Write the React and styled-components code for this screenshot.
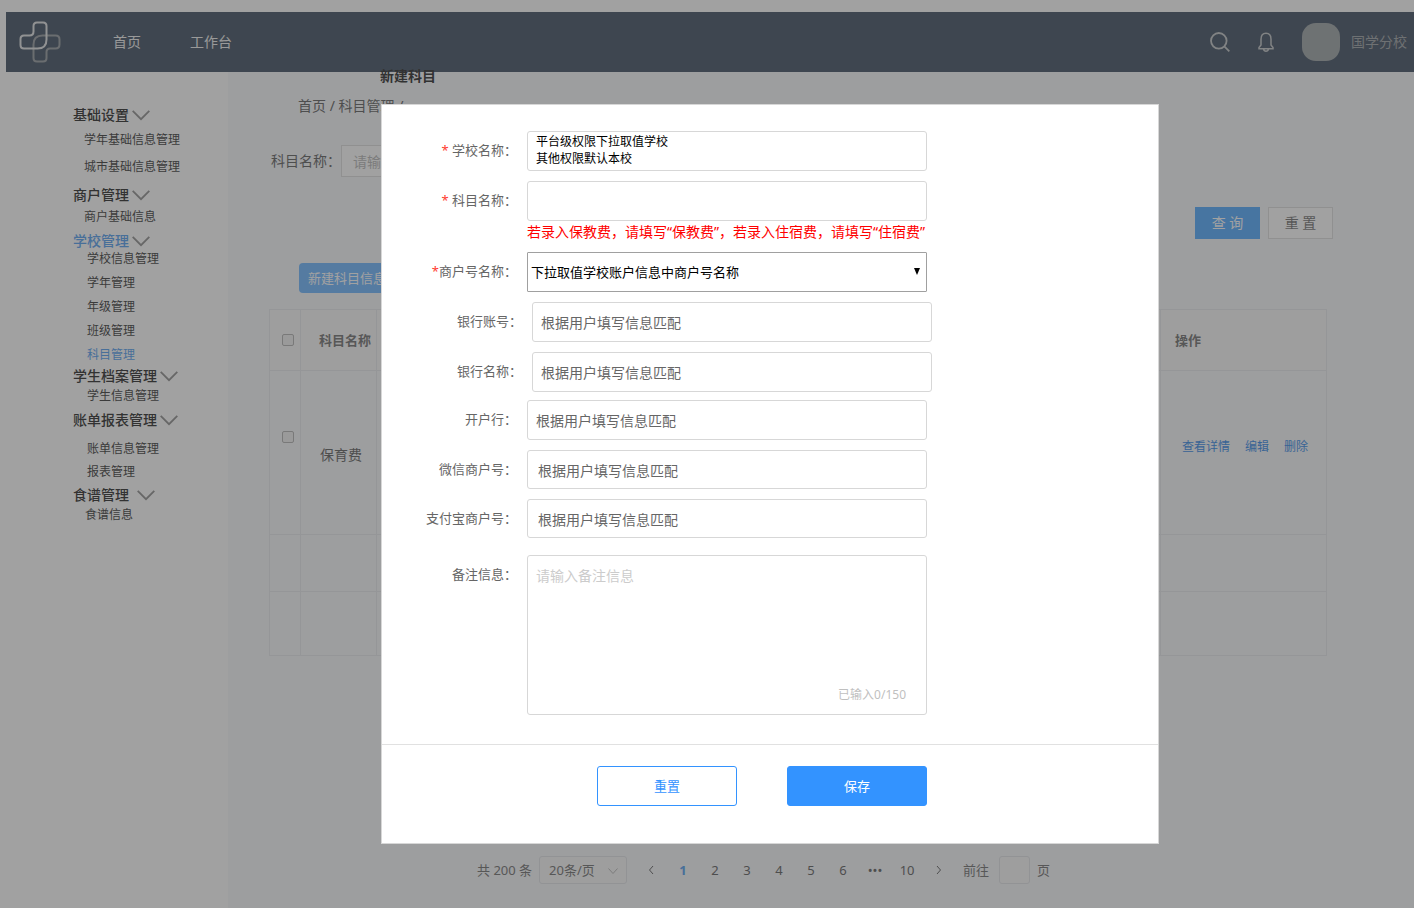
import React from "react";
import styled, { createGlobalStyle } from "styled-components";

const menu = [
  { title: "基础设置", top: 0, lead: 9, gap: 11, indent: 11, items: ["学年基础信息管理", "城市基础信息管理"] },
  { title: "商户管理", top: 12, lead: 6, gap: 8, indent: 11, items: ["商户基础信息"] },
  {
    title: "学校管理",
    active: true,
    top: 8,
    lead: 2,
    gap: 8,
    indent: 14,
    items: ["学校信息管理", "学年管理", "年级管理", "班级管理", "科目管理"],
  },
  { title: "学生档案管理", top: 5, lead: 4, gap: 8, indent: 14, items: ["学生信息管理"] },
  { title: "账单报表管理", top: 8, lead: 13, gap: 7, indent: 14, items: ["账单信息管理", "报表管理"] },
  { title: "食谱管理", top: 7, lead: 4, gap: 8, indent: 12, arrowGap: 8, items: ["食谱信息"] },
];

const currentItem = "科目管理";
const pages = ["1", "2", "3", "4", "5", "6", "•••", "10"];
const matchText = "根据用户填写信息匹配";

const Chevron = () => (
  <svg width="18" height="12" viewBox="0 0 18 12" fill="none" stroke="#949494" strokeWidth="1.800">
    <path d="M.700 1.800 9 10.200l8.300-8.400" />
  </svg>
);

const Arrow = ({ d }) => (
  <svg width="12" height="12" viewBox="0 0 12 12" fill="none" stroke="currentColor" strokeWidth="1">
    <path d={d} />
  </svg>
);

const Logo = () => (
  <svg width="42" height="42" viewBox="0 0 42 42" fill="none" strokeWidth="2">
    <path
      stroke="#9a9fa4"
      d="M23.500 14.500h13q4 0 4 4v5q0 4-4 4H31q-3.500 0-3.500 3.500v6q0 3.500-3.500 3.500h-6q-3.500 0-3.500-3.500V23.500q0-9 9-9Z"
    />
    <path
      stroke="#e2e4e6"
      d="M18 1.500h6q3.500 0 3.500 3.500v13.500q0 9-9 9H5q-3.500 0-3.500-3.500v-6q0-3.500 3.500-3.500h5.500q4 0 4-4V5q0-3.500 3.500-3.500Z"
    />
  </svg>
);

const Field = ({ id, label, required, tight, children }) => (
  <FieldRow>
    <FieldLabel htmlFor={id}>
      {required && <Star>*</Star>}
      {required && !tight && " "}
      {label}：
    </FieldLabel>
    <FieldBody>{children}</FieldBody>
  </FieldRow>
);

const Sidebar = () => (
  <Side>
    {menu.map((group) => (
      <MenuGroup key={group.title} $top={group.top}>
        <MenuTitle type="button" $active={group.active} $arrowGap={group.arrowGap}>
          {group.title}
          <Chevron />
        </MenuTitle>
        <MenuList $lead={group.lead} $gap={group.gap} $indent={group.indent}>
          {group.items.map((item) => (
            <li key={item}>
              <MenuLink href="#" $active={item === currentItem}>
                {item}
              </MenuLink>
            </li>
          ))}
        </MenuList>
      </MenuGroup>
    ))}
  </Side>
);

const SubjectTable = () => (
  <Table>
    <colgroup>
      <CheckCol />
      <NameCol />
      <col />
      <ActionCol />
    </colgroup>
    <thead>
      <Row $height={61}>
        <CheckCell as="th">
          <input type="checkbox" aria-label="全选" />
        </CheckCell>
        <HeadCell $left={18}>科目名称</HeadCell>
        <HeadCell />
        <HeadCell $left={14}>操作</HeadCell>
      </Row>
    </thead>
    <tbody>
      <Row $height={164}>
        <CheckCell $lift={32}>
          <input type="checkbox" aria-label="保育费" />
        </CheckCell>
        <NameCell>保育费</NameCell>
        <td />
        <td>
          <Actions>
            <a href="#">查看详情</a>
            <a href="#">编辑</a>
            <a href="#">删除</a>
          </Actions>
        </td>
      </Row>
      <Row $height={57}>
        <td />
        <td />
        <td />
        <td />
      </Row>
      <Row $height={64}>
        <td />
        <td />
        <td />
        <td />
      </Row>
    </tbody>
  </Table>
);

const Pagination = () => (
  <Pager aria-label="分页">
    <span>共 200 条</span>
    <SizeBox>
      <select aria-label="每页条数">
        <option>20条/页</option>
      </select>
      <Arrow d="M1.500 3.500 6 8.500l4.500-5" />
    </SizeBox>
    <PageList>
      <PageButton type="button" aria-label="上一页">
        <Arrow d="M8 2 4.500 6 8 10" />
      </PageButton>
      {pages.map((page) => (
        <PageButton type="button" key={page} $active={page === "1"}>
          {page}
        </PageButton>
      ))}
      <PageButton type="button" aria-label="下一页">
        <Arrow d="M4 2l3.500 4L4 10" />
      </PageButton>
    </PageList>
    <Jump>
      前往
      <input type="text" />
      页
    </Jump>
  </Pager>
);

const SubjectDialog = () => {
  const [remark, setRemark] = React.useState("");

  return (
    <Overlay>
      <Dialog role="dialog" aria-label="新建科目">
        <Form>
          <Fields>
            <Field id="school" label="学校名称" required>
              <SchoolBox id="school" rows={2} readOnly value={"平台级权限下拉取值学校\n其他权限默认本校"} />
            </Field>
            <Field id="subject" label="科目名称" required>
              <TextInput id="subject" type="text" />
              <Hint>若录入保教费，请填写“保教费”，若录入住宿费，请填写“住宿费”</Hint>
            </Field>
            <Field id="merchant" label="商户号名称" required tight>
              <SelectBox>
                <select id="merchant">
                  <option>下拉取值学校账户信息中商户号名称</option>
                </select>
                <svg width="6" height="7" viewBox="0 0 6 7">
                  <path d="M0 0h6L3 7z" fill="#000" />
                </svg>
              </SelectBox>
            </Field>
            <BankFields>
              <Field id="account" label="银行账号">
                <TextInput id="account" type="text" defaultValue={matchText} />
              </Field>
              <Field id="bank" label="银行名称">
                <TextInput id="bank" type="text" defaultValue={matchText} />
              </Field>
            </BankFields>
          </Fields>
          <Fields>
            <Field id="branch" label="开户行">
              <TextInput id="branch" type="text" defaultValue={matchText} />
            </Field>
            <Field id="wechat" label="微信商户号">
              <TextInput id="wechat" type="text" defaultValue={matchText} $short />
            </Field>
            <Field id="alipay" label="支付宝商户号">
              <TextInput id="alipay" type="text" defaultValue={matchText} $short />
            </Field>
          </Fields>
          <Remark>
            <Field id="remark" label="备注信息">
              <RemarkBox>
                <textarea
                  id="remark"
                  maxLength={150}
                  placeholder="请输入备注信息"
                  value={remark}
                  onChange={(e) => setRemark(e.target.value)}
                />
                <span>已输入{remark.length}/150</span>
              </RemarkBox>
            </Field>
          </Remark>
        </Form>
        <DialogFooter>
          <DialogButton type="button">重置</DialogButton>
          <DialogButton type="button" $primary>
            保存
          </DialogButton>
        </DialogFooter>
      </Dialog>
    </Overlay>
  );
};

export default function App() {
  return (
    <Page>
      <GlobalStyle />
      <Header>
        <Logo />
        <Nav>
          <a href="#">首页</a>
          <a href="#">工作台</a>
        </Nav>
        <Tools>
          <IconButton type="button" aria-label="搜索">
            <svg width="20" height="20" viewBox="0 0 20 20" fill="none" stroke="currentColor" strokeWidth="1.800">
              <circle cx="8.800" cy="8.800" r="7.800" />
              <path d="m14.300 14.300 5 5" />
            </svg>
          </IconButton>
          <IconButton type="button" aria-label="通知">
            <svg width="16" height="20" viewBox="0 0 16 20" fill="none" stroke="currentColor" strokeWidth="1.500">
              <path d="M3 13V7.300C3 3.500 5 1.200 8 1.200s5 2.300 5 6.100V13l2 2.500v1.300H1v-1.300ZM5.500 17q.500 2.200 2.500 2.200t2.500-2.200" />
            </svg>
          </IconButton>
          <Avatar />
          <span>国学分校</span>
        </Tools>
      </Header>
      <Body>
        <Sidebar />
        <Main>
          <PageTitle>新建科目</PageTitle>
          <Crumbs>首页 / 科目管理 /</Crumbs>
          <Filter>
            <label htmlFor="filter">科目名称：</label>
            <input id="filter" type="text" placeholder="请输入科目名称" />
          </Filter>
          <FilterButtons>
            <SearchButton type="button" $primary>
              查 询
            </SearchButton>
            <SearchButton type="button">重 置</SearchButton>
          </FilterButtons>
          <CreateButton type="button">新建科目信息</CreateButton>
          <SubjectTable />
          <Pagination />
        </Main>
      </Body>
      <SubjectDialog />
    </Page>
  );
}

const GlobalStyle = createGlobalStyle`
  * {
    box-sizing: border-box;
  }

  body {
    margin: 0;
    background: #fff;
  }

  body, button, input, select, textarea {
    font-family: "Noto Sans", "Noto Sans CJK SC", sans-serif;
    font-size: 14px;
    line-height: 20px;
  }

  button {
    padding: 0;
    border: none;
    background: none;
    cursor: pointer;
  }

  a {
    color: inherit;
    text-decoration: none;
  }

  svg {
    display: block;
    flex: none;
  }
`;

const Page = styled.div`
  display: flex;
  flex-direction: column;
  min-height: 100vh;
  padding-top: 12px;
  color: #666;
`;

const Header = styled.header`
  display: flex;
  align-items: center;
  height: 60px;
  margin-left: 6px;
  padding: 0 7px 0 13px;
  background: #495869;
  color: #f0f0f0;
`;

const Nav = styled.nav`
  display: flex;
  gap: 49px;
  margin-left: 52px;
`;

const Tools = styled.div`
  display: flex;
  align-items: center;
  margin-left: auto;
  color: #a2a6aa;
`;

const IconButton = styled.button`
  margin-right: 28px;
  color: #c4c7ca;
`;

const Avatar = styled.div`
  width: 38px;
  height: 38px;
  margin-right: 11px;
  border-radius: 14px;
  background: #a2a8ab;
`;

const Body = styled.div`
  display: flex;
  flex: 1;
`;

const Side = styled.aside`
  flex: none;
  width: 228px;
  padding: 35px 0 0 73px;
`;

const MenuGroup = styled.div`
  margin-top: ${(p) => p.$top}px;
`;

const MenuTitle = styled.button`
  display: flex;
  align-items: center;
  gap: ${(p) => p.$arrowGap || 3}px;
  font-weight: 500;
  line-height: 16px;
  color: ${(p) => (p.$active ? "#5ba3f0" : "#333")};
`;

const MenuList = styled.ul`
  display: flex;
  flex-direction: column;
  gap: ${(p) => p.$gap}px;
  margin: ${(p) => p.$lead}px 0 0;
  padding: 0 0 0 ${(p) => p.$indent}px;
  font-size: 12px;
  line-height: 16px;
  list-style: none;
`;

const MenuLink = styled.a`
  display: block;
  color: ${(p) => (p.$active ? "#5ba3f0" : "#444")};
`;

const Main = styled.main`
  flex: 1;
  min-width: 0;
  padding: 0 87px 24px 41px;
  background: #f7f9fc;
`;

const PageTitle = styled.h1`
  margin: 0 0 16px 111px;
  font-size: 14px;
  font-weight: 700;
  line-height: 8px;
  color: #333;
`;

const Crumbs = styled.div`
  margin: 0 0 29px 29px;
`;

const Filter = styled.div`
  display: flex;
  align-items: center;
  padding-left: 2px;

  input {
    width: 200px;
    height: 32px;
    padding: 0 11px;
    border: 1px solid #e0e0e0;
    background: #fff;
  }

  input::placeholder {
    color: #bbb;
  }
`;

const FilterButtons = styled.div`
  display: flex;
  justify-content: flex-end;
  gap: 8px;
  margin: 30px -6px 24px 0;
`;

const SearchButton = styled.button`
  width: 65px;
  height: 32px;
  border: 1px solid ${(p) => (p.$primary ? "#5aaeff" : "#e0e0e0")};
  background: ${(p) => (p.$primary ? "#5aaeff" : "#fff")};
  color: ${(p) => (p.$primary ? "#fff" : "#777")};
`;

const CreateButton = styled.button`
  display: block;
  height: 30px;
  margin: 0 0 16px 30px;
  padding: 0 9px;
  border-radius: 4px;
  background: #73b9ff;
  color: #fff;
  font-size: 13px;
`;

const Table = styled.table`
  width: 100%;
  border-collapse: collapse;
  table-layout: fixed;

  th, td {
    border: 1px solid #e9ebee;
    padding: 0;
    text-align: left;
    white-space: nowrap;
  }

  th {
    background: #fafafa;
  }

  input {
    display: block;
    width: 12px;
    height: 12px;
    margin: 0 auto;
    border: 1px solid #b5b5b5;
    border-radius: 2px;
    appearance: none;
    background: #f2f2f2;
  }

  input:checked {
    background: #5aaeff;
  }
`;

const CheckCol = styled.col`
  width: 31px;
`;

const NameCol = styled.col`
  width: 76px;
`;

const ActionCol = styled.col`
  width: 166px;
`;

const Row = styled.tr`
  height: ${(p) => p.$height}px;
`;

const CheckCell = styled.td`
  && {
    padding: 0 0 ${(p) => p.$lift || 0}px 5px;
  }
`;

const HeadCell = styled.th`
  && {
    padding-left: ${(p) => p.$left || 0}px;
  }
  font-size: 13px;
  font-weight: 700;
  color: #777;
`;

const NameCell = styled.td`
  && {
    padding: 4px 0 0 19px;
  }
`;

const Actions = styled.div`
  display: flex;
  gap: 15px;
  padding: 0 0 12px 21px;
  font-size: 12px;
  color: #3d8ee8;
`;

const Pager = styled.nav`
  display: flex;
  align-items: center;
  margin: 200px 0 0 208px;
  font-size: 13px;
  white-space: nowrap;
  color: #777;
`;

const SizeBox = styled.div`
  position: relative;
  margin: 0 8px 0 7px;
  color: #bbb;

  select {
    display: block;
    width: 88px;
    height: 28px;
    padding: 0 9px;
    border: 1px solid #e3e5e9;
    border-radius: 3px;
    appearance: none;
    background: #fafafa;
    color: #777;
    font-size: 13px;
  }

  svg {
    position: absolute;
    top: 9px;
    right: 8px;
    pointer-events: none;
  }
`;

const PageList = styled.div`
  display: flex;
`;

const PageButton = styled.button`
  display: flex;
  align-items: center;
  justify-content: center;
  width: 32px;
  height: 28px;
  font-size: 13px;
  font-weight: ${(p) => (p.$active ? 700 : 400)};
  color: ${(p) => (p.$active ? "#5ba3f0" : "#666")};
`;

const Jump = styled.label`
  display: flex;
  align-items: center;
  margin-left: 8px;

  input {
    width: 31px;
    height: 28px;
    margin: 0 7px 0 10px;
    border: 1px solid #e3e5e9;
    border-radius: 3px;
    background: #fafafa;
  }
`;

const Overlay = styled.div`
  position: fixed;
  inset: 0;
  display: flex;
  align-items: flex-start;
  padding: 104px 255px 0 381px;
  background: rgba(51, 51, 51, 0.46);
`;

const Dialog = styled.section`
  flex: 1;
  border: 1px solid #d7d7d7;
  background: #fff;
`;

const Form = styled.form`
  display: flex;
  flex-direction: column;
  gap: 8px;
  padding: 26px 0 29px;
`;

const Fields = styled.div`
  display: flex;
  flex-direction: column;
  gap: 10px;
`;

const BankFields = styled(Fields)`
  padding-left: 5px;
`;

const Remark = styled.div`
  padding-top: 9px;
`;

const FieldRow = styled.div`
  display: flex;
  gap: 10px;
`;

const FieldLabel = styled.label`
  flex: none;
  width: 135px;
  font-size: 13px;
  line-height: 39px;
  text-align: right;
  white-space: nowrap;
`;

const Star = styled.span`
  color: #ff3b30;
`;

const FieldBody = styled.div`
  flex: 0 1 400px;
  min-width: 0;
`;

const TextInput = styled.input`
  display: block;
  width: 100%;
  height: ${(p) => (p.$short ? 39 : 40)}px;
  padding: 0 ${(p) => (p.$short ? 10 : 8)}px;
  border: 1px solid #d7d7d7;
  border-radius: 3px;
  background: #fff;
  color: #666;
`;

const SchoolBox = styled.textarea`
  display: block;
  width: 100%;
  height: 40px;
  padding: 1px 8px;
  border: 1px solid #d7d7d7;
  border-radius: 3px;
  color: #000;
  font-size: 12px;
  line-height: 17px;
  overflow: hidden;
  resize: none;
`;

const Hint = styled.div`
  line-height: 21px;
  white-space: nowrap;
  color: #f00;
`;

const SelectBox = styled.div`
  position: relative;

  select {
    display: block;
    width: 100%;
    height: 40px;
    padding: 0 3px;
    border: 1px solid #a0a0a0;
    border-radius: 1px;
    appearance: none;
    background: #fff;
    color: #000;
    font-size: 13px;
  }

  svg {
    position: absolute;
    top: 16px;
    right: 7px;
    pointer-events: none;
  }
`;

const RemarkBox = styled.div`
  position: relative;

  textarea {
    display: block;
    width: 100%;
    height: 160px;
    padding: 10px 8px;
    border: 1px solid #d7d7d7;
    border-radius: 3px;
    resize: none;
  }

  textarea::placeholder {
    color: #ccc;
  }

  span {
    position: absolute;
    right: 21px;
    bottom: 10px;
    font-size: 12px;
    color: #bfbfbf;
  }
`;

const DialogFooter = styled.footer`
  display: flex;
  gap: 50px;
  padding: 21px 0 37px 215px;
  border-top: 1px solid #e1e1e1;
`;

const DialogButton = styled.button`
  width: 140px;
  height: 40px;
  border: 1px solid #3393ff;
  border-radius: 3px;
  background: ${(p) => (p.$primary ? "#3393ff" : "#fff")};
  color: ${(p) => (p.$primary ? "#fff" : "#3393ff")};
  font-size: 13px;
`;
